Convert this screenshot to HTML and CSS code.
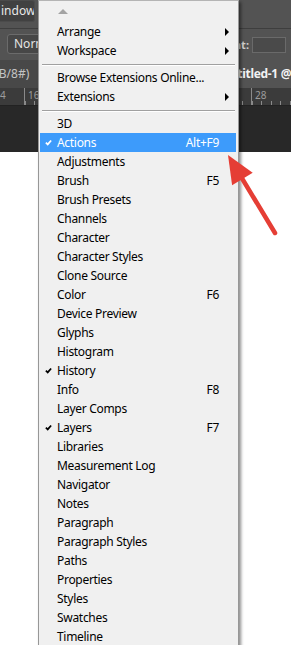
FILE: index.html
```html
<!DOCTYPE html>
<html lang="en">

<head>
    <meta charset="UTF-8">
    <meta name="viewport" content="width=device-width, initial-scale=1.0">
    <title>Window menu</title>
    <link rel="stylesheet" href="styles.css">
</head>

<body>
    <div class="workspace">
        <div class="menubar">
            <span class="menubar-item">indow</span>
        </div>
        <div class="options">
            <span class="mode-select">Normal</span>
            <span class="field-label">Content:</span>
            <span class="field"></span>
        </div>
        <div class="tabs">
            <div class="tab tab-first"><span class="tab-text">(RGB/8#)</span></div>
            <div class="tab tab-active"><span class="tab-text">Untitled-1 @</span></div>
        </div>
        <div class="ruler">
            <span class="ruler-mark first">4</span>
            <span class="ruler-mark middle">16</span>
            <span class="ruler-mark">28</span>
        </div>
        <div class="pasteboard"></div>
        <div class="canvas"></div>
    </div>

    <div class="menu">
        <div class="menu-scroll"><span class="scroll-up"></span></div>
        <div class="item sub"><span class="gutter"></span>Arrange</div>
        <div class="item sub"><span class="gutter"></span>Workspace</div>
        <div class="sep"></div>
        <div class="item"><span class="gutter"></span>Browse Extensions Online...</div>
        <div class="item sub"><span class="gutter"></span>Extensions</div>
        <div class="sep"></div>
        <div class="item"><span class="gutter"></span>3D</div>
        <div class="item active">
            <span class="gutter"><svg class="check" viewBox="0 0 8 7"><path d="M1 3.6 L3.1 5.7 L7 1.2" /></svg></span>
            Actions<span class="key">Alt+F9</span>
        </div>
        <div class="item"><span class="gutter"></span>Adjustments</div>
        <div class="item"><span class="gutter"></span>Brush<span class="key">F5</span></div>
        <div class="item"><span class="gutter"></span>Brush Presets</div>
        <div class="item"><span class="gutter"></span>Channels</div>
        <div class="item"><span class="gutter"></span>Character</div>
        <div class="item"><span class="gutter"></span>Character Styles</div>
        <div class="item"><span class="gutter"></span>Clone Source</div>
        <div class="item"><span class="gutter"></span>Color<span class="key">F6</span></div>
        <div class="item"><span class="gutter"></span>Device Preview</div>
        <div class="item"><span class="gutter"></span>Glyphs</div>
        <div class="item"><span class="gutter"></span>Histogram</div>
        <div class="item">
            <span class="gutter"><svg class="check" viewBox="0 0 8 7"><path d="M1 3.6 L3.1 5.7 L7 1.2" /></svg></span>
            History
        </div>
        <div class="item"><span class="gutter"></span>Info<span class="key">F8</span></div>
        <div class="item"><span class="gutter"></span>Layer Comps</div>
        <div class="item">
            <span class="gutter"><svg class="check" viewBox="0 0 8 7"><path d="M1 3.6 L3.1 5.7 L7 1.2" /></svg></span>
            Layers<span class="key">F7</span>
        </div>
        <div class="item"><span class="gutter"></span>Libraries</div>
        <div class="item"><span class="gutter"></span>Measurement Log</div>
        <div class="item"><span class="gutter"></span>Navigator</div>
        <div class="item"><span class="gutter"></span>Notes</div>
        <div class="item"><span class="gutter"></span>Paragraph</div>
        <div class="item"><span class="gutter"></span>Paragraph Styles</div>
        <div class="item"><span class="gutter"></span>Paths</div>
        <div class="item"><span class="gutter"></span>Properties</div>
        <div class="item"><span class="gutter"></span>Styles</div>
        <div class="item"><span class="gutter"></span>Swatches</div>
        <div class="item"><span class="gutter"></span>Timeline</div>
    </div>

    <!-- red pointer drawn over the menu -->
    <svg class="pointer" width="70" height="100" viewBox="0 0 70 100">
        <path d="M22.4 34 L55 88" stroke="#e53e35" stroke-width="4.5" stroke-linecap="round" fill="none" />
        <polygon points="8,10 32.7,27.8 12.1,40.2" fill="#e53e35" />
    </svg>
</body>

</html>
```

FILE: styles.css
```css
/* General styles */
body {
    margin: 0;
    padding: 0;
    width: 291px;
    height: 645px;
    overflow: hidden;
    position: relative;
    font-family: 'Noto Sans', 'Open Sans', sans-serif;
    background: #ffffff;
}

/* Photoshop chrome behind the menu */
.workspace {
    display: flex;
    flex-direction: column;
    height: 645px;
}

.menubar {
    height: 28px;
    background: #535353;
    border-bottom: 1px solid #3e3e3e;
    display: flex;
    align-items: flex-start;
}

.menubar-item {
    height: 22px;
    width: 35px;
    box-sizing: border-box;
    padding-left: 1px;
    background: #414141;
    border: 1px solid #4b4b4b;
    border-left: none;
    border-radius: 0 3px 3px 0;
    color: #e8e8e8;
    font-size: 12px;
    line-height: 20px;
    overflow: hidden;
}

.options {
    height: 31px;
    background: #535353;
    display: flex;
    align-items: center;
    padding: 0 5px 0 7px;
}

.mode-select {
    height: 20px;
    width: 60px;
    box-sizing: border-box;
    border: 1px solid #6b6b6b;
    border-radius: 3px;
    background: #474747;
    color: #e4e4e4;
    font-size: 12px;
    line-height: 18px;
    padding-left: 6px;
    margin-bottom: 2px;
}

.field-label {
    margin-left: auto;
    color: #d0d0d0;
    font-size: 11px;
    font-weight: 700;
    margin-right: 3px;
}

.field {
    width: 34px;
    height: 16px;
    box-sizing: border-box;
    border: 1px solid #6a6a6a;
    background: #4a4a4a;
}

.tabs {
    height: 28px;
    background: #484848;
    display: flex;
    font-size: 12px;
}

.tab {
    flex: none;
    white-space: nowrap;
    height: 28px;
    line-height: 28px;
    overflow: hidden;
}

.tab-text {
    display: block;
}

.tab-first {
    width: 38px;
    color: #c4c4c4;
}

.tab-first .tab-text {
    margin-left: -21px;
}

.tab-active {
    margin-left: 176px;
    width: 77px;
    background: #535353;
    color: #f2f2f2;
    font-weight: 700;
    letter-spacing: -0.3px;
}

.tab-active .tab-text {
    margin-left: 7px;
}

.ruler {
    height: 17px;
    background:
        repeating-linear-gradient(to right, #8a8a8a 0 1px, transparent 1px 9.45px) 25px 100% / 100% 4px no-repeat,
        #3b3b3b;
    border-bottom: 1px solid #222;
    display: flex;
    font-size: 10px;
    color: #9c9c9c;
}

.ruler-mark {
    border-left: 1px solid #8a8a8a;
    padding-left: 3px;
    line-height: 14px;
}

.ruler-mark.first {
    margin-left: -3px;
    width: 24px;
    border-left: none;
    padding-left: 3px;
}

.ruler-mark.middle {
    width: 223px;
}

.pasteboard {
    height: 46px;
    background: #282828;
}

.canvas {
    flex: 1;
    background: #ffffff;
}

/* Window menu */
.menu {
    position: absolute;
    left: 38px;
    top: 0;
    width: 199px;
    height: 660px;
    background: #f0f0f0;
    border-left: 1px solid #979797;
    border-right: 1px solid #979797;
    border-top: 1px solid #b4b4b4;
    box-shadow: 2px 2px 3px rgba(0, 0, 0, 0.45);
    font-size: 12px;
    letter-spacing: -0.3px;
    color: #000000;
}

.menu-scroll {
    height: 21px;
    padding-left: 19px;
    padding-top: 8px;
    box-sizing: border-box;
}

.scroll-up {
    display: block;
    width: 0;
    height: 0;
    border-left: 5px solid transparent;
    border-right: 5px solid transparent;
    border-bottom: 5px solid #a3a3a3;
}

.item {
    height: 19px;
    margin: 0 2px 0 1px;
    display: flex;
    align-items: center;
    white-space: nowrap;
}

.gutter {
    width: 17px;
    flex: none;
    display: flex;
    align-items: center;
    padding-left: 5px;
    box-sizing: border-box;
}

.check {
    width: 7px;
    height: 7px;
    fill: none;
    stroke: #000000;
    stroke-width: 2;
}

.item.active {
    background: #3d9bfb;
    color: #ffffff;
}

.item.active .check {
    stroke: #ffffff;
}

.key {
    margin-left: auto;
    padding-right: 17px;
}

.item.sub::after {
    content: "";
    margin-left: auto;
    margin-right: 7px;
    width: 0;
    height: 0;
    border-left: 4px solid #000000;
    border-top: 4px solid transparent;
    border-bottom: 4px solid transparent;
}

.sep {
    height: 8px;
    display: flex;
    align-items: center;
    padding: 0 3px 0 3px;
}

.sep::before {
    content: "";
    flex: 1;
    height: 1px;
    background: #a0a0a0;
    box-shadow: 0 1px 0 #ffffff;
}

.pointer {
    position: absolute;
    left: 220px;
    top: 145px;
}
```
